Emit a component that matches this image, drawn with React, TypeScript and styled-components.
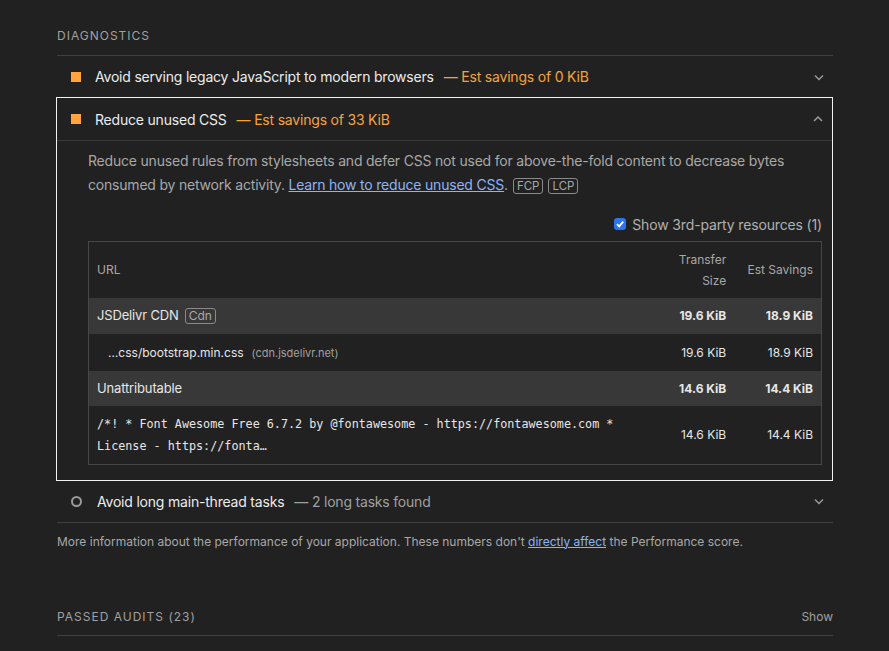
import { createGlobalStyle } from "styled-components";
import styled from "styled-components";

const GlobalStyle = createGlobalStyle`
  html, body {
    margin: 0;
    background: #212121;
  }
  body {
    font-family: Inter, "Noto Sans", sans-serif;
    -webkit-font-smoothing: antialiased;
  }
`

const StyledPage = styled.div`
  width: 776px;
  padding: 0 0 16px 57px;
`
const StyledGroupHeader = styled.div`
  display: flex;
  align-items: center;
  justify-content: space-between;
  padding: ${(p: { $top: number }) => p.$top}px 0 ${(p: { $top: number }) => (p.$top > 40 ? 10 : 11)}px;
  border-bottom: 1px solid #3f3f3f;
  font-size: 12px;
  line-height: 16px;
  letter-spacing: 1px;
  text-transform: uppercase;
  color: #a0a0a0;
`
const StyledShow = styled.span`
  font-size: 12px;
  letter-spacing: 0;
  text-transform: none;
  color: #a0a0a0;
`
const StyledAudit = styled.div<{ $open?: boolean }>`
  border: ${(p) => (p.$open ? "1px solid #f2f2f2" : "none")};
  border-bottom: 1px solid ${(p) => (p.$open ? "#f2f2f2" : "#3f3f3f")};
  margin: ${(p) => (p.$open ? "-1px 0 0 -1px" : "0")};
`
const StyledSummary = styled.div<{ $open?: boolean }>`
  display: flex;
  align-items: center;
  height: ${(p) => (p.$open ? 42 : 41)}px;
  padding: 0 8px 0 14px;
  border-bottom: ${(p) => (p.$open ? "1px solid #3a3a3a" : "none")};
  font-size: 14px;
  letter-spacing: -0.2px;
  color: #ececec;
`
const StyledSquare = styled.span`
  width: 10px;
  height: 10px;
  margin-right: 14px;
  background: #ffa43e;
`
const StyledCircle = styled.span`
  width: 7px;
  height: 7px;
  margin-right: 15px;
  border: 2px solid #9a9a9a;
  border-radius: 50%;
`
const StyledTitle = styled.span`
  flex: 1;
  white-space: nowrap;
`
const StyledDisplay = styled.span<{ $color: string }>`
  margin-left: 10px;
  color: ${(p) => p.$color};
`
const StyledChevron = styled.svg`
  width: 12px;
  height: 12px;
  flex-shrink: 0;
`
const StyledBody = styled.div`
  padding: 8px 10px 15px 31px;
`
const StyledDescription = styled.p`
  margin: 0;
  font-size: 14px;
  line-height: 24px;
  letter-spacing: -0.2px;
  color: #a8a8a8;
`
const StyledLink = styled.a`
  color: #8ab4f8;
  text-decoration: underline;
`
const StyledMetric = styled.span`
  display: inline-block;
  margin-left: 5px;
  padding: 0 3px;
  border: 1px solid #8a8a8a;
  border-radius: 3px;
  font-size: 11.5px;
  line-height: 14px;
  letter-spacing: 0;
  color: #a8a8a8;
`
const StyledToggle = styled.label`
  display: flex;
  align-items: center;
  justify-content: flex-end;
  gap: 6px;
  height: 24px;
  margin: 15px 0 5px;
  font-size: 14px;
  letter-spacing: -0.15px;
  color: #b0b0b0;
`
const StyledCheck = styled.span`
  display: flex;
  align-items: center;
  justify-content: center;
  width: 12px;
  height: 12px;
  border-radius: 3px;
  background: #2d74ec;
`
const StyledTable = styled.table`
  width: 100%;
  border-collapse: collapse;
  border: 1px solid #474747;
  font-size: 12px;
  color: #e6e6e6;
`
const StyledTh = styled.th<{ $align?: string; $width?: number }>`
  box-sizing: border-box;
  height: 56px;
  padding: 0 8px;
  text-align: ${(p) => p.$align || "left"};
  width: ${(p) => (p.$width ? `${p.$width}px` : "auto")};
  font-weight: 400;
  line-height: 21px;
  color: #a8a8a8;
`
const StyledTr = styled.tr<{ $group?: boolean }>`
  background: ${(p) => (p.$group ? "#383838" : "#212121")};
`
const StyledTd = styled.td<{ $align?: string; $bold?: boolean; $height: number }>`
  height: ${(p) => p.$height}px;
  padding: 0 8px;
  text-align: ${(p) => p.$align || "left"};
  font-weight: ${(p) => (p.$bold ? 700 : 400)};
  white-space: nowrap;
`
const StyledEntity = styled.span`
  font-size: 13px;
  letter-spacing: -0.15px;
`
const StyledEntityTag = styled.span`
  display: inline-block;
  margin-left: 6px;
  padding: 0 3px;
  border: 1px solid #8a8a8a;
  border-radius: 3px;
  font-size: 12px;
  line-height: 14px;
  color: #a8a8a8;
`
const StyledUrl = styled.span`
  padding-left: 11px;
  font-size: 12px;
`
const StyledHost = styled.span`
  margin-left: 8px;
  font-size: 11px;
  color: #a0a0a0;
`
const StyledCode = styled.div`
  font-family: "DejaVu Sans Mono", "Liberation Mono", monospace;
  font-size: 11.75px;
  line-height: 22px;
  white-space: normal;
  width: 540px;
`
const StyledFooterNote = styled.p`
  margin: 11px 0 0;
  font-size: 12px;
  line-height: 16px;
  color: #a8a8a8;
`

function Chevron({ up }: { up?: boolean }) {
  return (
    <StyledChevron viewBox="0 0 12 12">
      <path d={up ? "M2 8 L6 4 L10 8" : "M2 4.5 L6 8.5 L10 4.5"} fill="none" stroke="#9a9a9a" strokeWidth="1.5" />
    </StyledChevron>
  )
}

export default function App() {
  return (
    <>
      <GlobalStyle />
      <StyledPage>
        <StyledGroupHeader $top={28}>Diagnostics</StyledGroupHeader>
        <StyledAudit>
          <StyledSummary>
            <StyledSquare />
            <StyledTitle>
              Avoid serving legacy JavaScript to modern browsers
              <StyledDisplay $color="#f5a33f">— Est savings of 0 KiB</StyledDisplay>
            </StyledTitle>
            <Chevron />
          </StyledSummary>
        </StyledAudit>
        <StyledAudit $open>
          <StyledSummary $open>
            <StyledSquare />
            <StyledTitle>
              Reduce unused CSS
              <StyledDisplay $color="#f5a33f">— Est savings of 33 KiB</StyledDisplay>
            </StyledTitle>
            <Chevron up />
          </StyledSummary>
          <StyledBody>
            <StyledDescription>
              Reduce unused rules from stylesheets and defer CSS not used for above-the-fold content to decrease bytes
              <br />
              consumed by network activity. <StyledLink href="#">Learn how to reduce unused CSS</StyledLink>.
              <StyledMetric>FCP</StyledMetric>
              <StyledMetric>LCP</StyledMetric>
            </StyledDescription>
            <StyledToggle>
              <StyledCheck>
                <svg width="10" height="10" viewBox="0 0 10 10">
                  <path d="M2 5.2 L4.2 7.4 L8.2 2.6" fill="none" stroke="#fff" strokeWidth="1.8" />
                </svg>
              </StyledCheck>
              Show 3rd-party resources (1)
            </StyledToggle>
            <StyledTable>
              <thead>
                <tr>
                  <StyledTh>URL</StyledTh>
                  <StyledTh $align="right" $width={90}>
                    Transfer
                    <br />
                    Size
                  </StyledTh>
                  <StyledTh $align="right" $width={88}>Est Savings</StyledTh>
                </tr>
              </thead>
              <tbody>
                <StyledTr $group>
                  <StyledTd $height={36}>
                    <StyledEntity>JSDelivr CDN</StyledEntity>
                    <StyledEntityTag>Cdn</StyledEntityTag>
                  </StyledTd>
                  <StyledTd $height={36} $align="right" $bold>19.6 KiB</StyledTd>
                  <StyledTd $height={36} $align="right" $bold>18.9 KiB</StyledTd>
                </StyledTr>
                <StyledTr>
                  <StyledTd $height={37}>
                    <StyledUrl>…css/bootstrap.min.css</StyledUrl>
                    <StyledHost>(cdn.jsdelivr.net)</StyledHost>
                  </StyledTd>
                  <StyledTd $height={37} $align="right">19.6 KiB</StyledTd>
                  <StyledTd $height={37} $align="right">18.9 KiB</StyledTd>
                </StyledTr>
                <StyledTr $group>
                  <StyledTd $height={35}>
                    <StyledEntity>Unattributable</StyledEntity>
                  </StyledTd>
                  <StyledTd $height={35} $align="right" $bold>14.6 KiB</StyledTd>
                  <StyledTd $height={35} $align="right" $bold>14.4 KiB</StyledTd>
                </StyledTr>
                <StyledTr>
                  <StyledTd $height={58}>
                    <StyledCode>/*! * Font Awesome Free 6.7.2 by @fontawesome - https://fontawesome.com * License - https://fonta…</StyledCode>
                  </StyledTd>
                  <StyledTd $height={58} $align="right">14.6 KiB</StyledTd>
                  <StyledTd $height={58} $align="right">14.4 KiB</StyledTd>
                </StyledTr>
              </tbody>
            </StyledTable>
          </StyledBody>
        </StyledAudit>
        <StyledAudit>
          <StyledSummary>
            <StyledCircle />
            <StyledTitle>
              Avoid long main-thread tasks
              <StyledDisplay $color="#a0a0a0">— 2 long tasks found</StyledDisplay>
            </StyledTitle>
            <Chevron />
          </StyledSummary>
        </StyledAudit>
        <StyledFooterNote>
          More information about the performance of your application. These numbers don't{" "}
          <StyledLink href="#">directly affect</StyledLink> the Performance score.
        </StyledFooterNote>
        <StyledGroupHeader $top={59}>
          Passed audits (23)
          <StyledShow>Show</StyledShow>
        </StyledGroupHeader>
      </StyledPage>
    </>
  )
}
